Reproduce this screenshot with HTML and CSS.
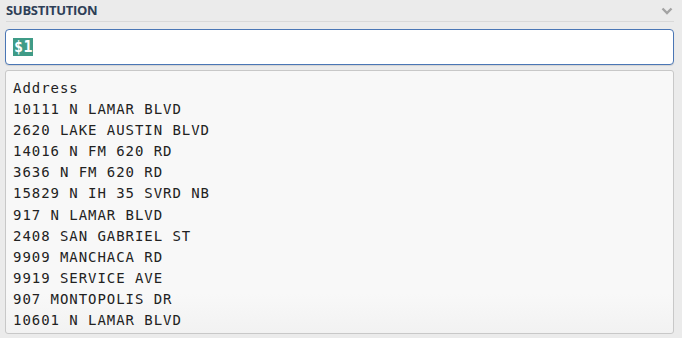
FILE: index.html
```html
<!DOCTYPE html>
<html>
<head>
    <title>Substitution</title>
    <link rel="stylesheet" href="styles.css">
</head>
<body>
    <div class="panel">
        <div class="panel-header">
            <span class="panel-title">SUBSTITUTION</span>
            <svg class="chevron" width="12" height="8" viewBox="0 0 12 8">
                <path d="M1.5 1.5 L6 6 L10.5 1.5" fill="none" stroke="#a3a3a3" stroke-width="2.4"/>
            </svg>
        </div>
        <div class="sub-input"><span class="token">$1</span></div>
        <div class="output">
            <div>Address</div>
            <div>10111 N LAMAR BLVD</div>
            <div>2620 LAKE AUSTIN BLVD</div>
            <div>14016 N FM 620 RD</div>
            <div>3636 N FM 620 RD</div>
            <div>15829 N IH 35 SVRD NB</div>
            <div>917 N LAMAR BLVD</div>
            <div>2408 SAN GABRIEL ST</div>
            <div>9909 MANCHACA RD</div>
            <div>9919 SERVICE AVE</div>
            <div>907 MONTOPOLIS DR</div>
            <div>10601 N LAMAR BLVD</div>
        </div>
    </div>
</body>
</html>
```

FILE: styles.css
```css
body {
    margin: 0;
    background: #ebebeb;
    font-family: 'Open Sans', 'Liberation Sans', sans-serif;
}

.panel {
    padding: 0 8px 0 5px;
}

.panel-header {
    display: flex;
    justify-content: space-between;
    align-items: center;
    height: 21px;
    margin-left: 1px;
    border-bottom: 1px solid #d9d9d9;
}

.panel-title {
    font-size: 13px;
    font-weight: bold;
    letter-spacing: -0.3px;
    color: #2e3f57;
    line-height: 21px;
}

.chevron {
    margin-right: 1px;
    margin-top: 1px;
}

.sub-input {
    margin-top: 7px;
    height: 34px;
    background: #fff;
    border: 1px solid #4a76b5;
    border-radius: 4px;
    box-shadow: 0 1px 1px rgba(0, 0, 0, 0.1);
    display: flex;
    align-items: center;
    padding-left: 7px;
}

.token {
    background: #3f9b87;
    color: #fff;
    font-family: 'DejaVu Sans Mono', monospace;
    font-weight: bold;
    font-size: 15px;
    letter-spacing: 0.5px;
    line-height: 18px;
    padding: 0 0 0 1px;
}

.output {
    margin-top: 5px;
    height: 250px;
    padding: 7px 7px 5px;
    background: linear-gradient(to bottom, #f8f8f8 85%, #f2f2f2);
    border: 1px solid #c8c8c8;
    border-radius: 3px;
    font-family: 'DejaVu Sans Mono', monospace;
    font-size: 14px;
    letter-spacing: 0.95px;
    line-height: 21.1px;
    color: #222;
}
```
